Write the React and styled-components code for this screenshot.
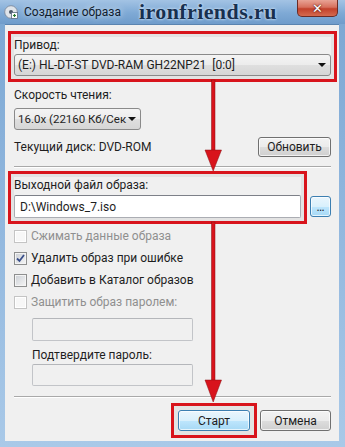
import React from "react";
import styled, { createGlobalStyle } from "styled-components";

const Global = createGlobalStyle`
  html, body {
    margin: 0;
    padding: 0;
    background: #fff;
  }
  body {
    font-family: Roboto, "Noto Sans", sans-serif;
    font-size: 12px;
    color: #1e1e1e;
  }
`;

const RED = "#d8141c";

const Window = styled.div`
  position: relative;
  width: 345px;
  height: 447px;
  box-sizing: border-box;
  display: flex;
  flex-direction: column;
  padding: 0 6px 6px 5px;
  background: linear-gradient(to bottom, #7aa6d2 0%, #8db4dc 40%, #a9c9e8 100%);
  overflow: hidden;
`;

const TitleBar = styled.div`
  height: 24px;
  display: flex;
  align-items: center;
  position: relative;
  margin: 0 -6px 0 -5px;
  padding-left: 4px;
  background: linear-gradient(to bottom, #a3c3e4 0%, #7ea9d5 55%, #6f9ccb 100%);
`;

const AppIcon = styled.svg`
  width: 14px;
  height: 14px;
  flex: none;
`;

const Title = styled.span`
  margin-left: 6px;
  font-size: 12px;
  color: #10202f;
  text-shadow: 0 0 6px rgba(255, 255, 255, 0.9);
`;

const Watermark = styled.span`
  margin-left: 18px;
  font-family: "Liberation Serif", "DejaVu Serif", serif;
  font-weight: bold;
  font-size: 22px;
  letter-spacing: 0.4px;
  color: #17304f;
  text-shadow: 0 0 2px #cfe3f6, 0 0 3px #cfe3f6;
`;

const CloseButton = styled.div`
  position: absolute;
  right: 7px;
  top: 0;
  width: 41px;
  height: 17px;
  box-sizing: border-box;
  border: 1px solid #6b2b25;
  border-top: none;
  border-radius: 0 0 5px 5px;
  background: linear-gradient(to bottom, #e8a395 0%, #d7705d 45%, #c2412b 55%, #d46a4f 100%);
  display: flex;
  align-items: center;
  justify-content: center;
  color: #fff;
  font-family: "DejaVu Sans", sans-serif;
  font-weight: bold;
  font-size: 13px;
  text-shadow: 0 0 1px #5a1a14, 0 0 2px #5a1a14;
`;

const Client = styled.div`
  flex: 1;
  display: flex;
  flex-direction: column;
  background: #f0f0f0;
  padding: 0 8px 0 9px;
  border-top: 1px solid #5a84b0;
`;

const Highlight = styled.div`
  outline: 3px solid ${RED};
  outline-offset: ${(p) => p.$offset}px;
  box-shadow: 0 0 0 ${(p) => p.$offset + 3}px rgba(0, 0, 0, 0.05);
  margin-top: ${(p) => p.$mt || 0}px;
  flex: ${(p) => p.$flex || "none"};
`;

const Label = styled.div`
  line-height: 16px;
  height: 16px;
  margin-top: ${(p) => p.$mt || 0}px;
  margin-left: ${(p) => p.$ml || 0}px;
  color: #1e1e1e;
`;

const Combo = styled.div`
  position: relative;
  height: 22px;
  width: ${(p) => (p.$width ? p.$width + "px" : "auto")};
  box-sizing: border-box;
  margin-top: ${(p) => p.$mt || 0}px;
  border: 1px solid #8a8a8a;
  border-radius: 3px;
  background: linear-gradient(to bottom, #f4f4f4 0%, #ececec 50%, #dfdfdf 51%, #d6d6d6 100%);
  display: flex;
  align-items: center;
  padding: 0 13px 0 3px;
  font-size: ${(p) => p.$fs || 12}px;
  white-space: nowrap;
  overflow: hidden;
  &::after {
    content: "";
    position: absolute;
    right: 4px;
    top: 8px;
    border-left: 4px solid transparent;
    border-right: 4px solid transparent;
    border-top: 4px solid #111;
  }
`;

const ComboText = styled.span`
  overflow: hidden;
  flex: 1;
`;

const Row = styled.div`
  display: flex;
  align-items: ${(p) => p.$align || "center"};
  justify-content: ${(p) => p.$justify || "flex-start"};
  gap: ${(p) => p.$gap || 0}px;
  margin-top: ${(p) => p.$mt || 0}px;
`;

const Button = styled.div`
  height: ${(p) => p.$h || 20}px;
  width: ${(p) => p.$w}px;
  box-sizing: border-box;
  border: 1px solid ${(p) => (p.$primary ? "#3c7fb1" : "#707070")};
  border-radius: 3px;
  background: ${(p) =>
    p.$primary
      ? "linear-gradient(to bottom, #eaf6fd 0%, #d9f0fc 50%, #bee6fd 51%, #a7d9f5 100%)"
      : "linear-gradient(to bottom, #f2f2f2 0%, #ebebeb 50%, #dddddd 51%, #cfcfcf 100%)"};
  box-shadow: inset 0 0 0 1px rgba(255, 255, 255, 0.7);
  display: flex;
  align-items: center;
  justify-content: center;
  color: #1e1e1e;
  flex: none;
`;

const Separator = styled.div`
  height: 1px;
  background: #a9a9a9;
  border-bottom: 1px solid #fff;
  margin-top: ${(p) => p.$mt}px;
`;

const TextInput = styled.div`
  height: ${(p) => p.$h || 23}px;
  width: ${(p) => (p.$width ? p.$width + "px" : "auto")};
  box-sizing: border-box;
  margin-top: ${(p) => p.$mt || 0}px;
  margin-left: ${(p) => p.$ml || 0}px;
  border: 1px solid ${(p) => (p.$disabled ? "#c2c4c8" : "#abadb3")};
  border-top-color: ${(p) => (p.$disabled ? "#b4b6ba" : "#7d8088")};
  border-radius: 2px;
  background: ${(p) => (p.$disabled ? "#f0f0f0" : "#fff")};
  display: flex;
  align-items: center;
  padding-left: 5px;
`;

const CheckList = styled.div`
  margin-top: ${(p) => p.$mt}px;
`;

const CheckRow = styled.label`
  display: flex;
  align-items: center;
  height: 22px;
  gap: 4px;
  color: ${(p) => (p.$disabled ? "#8f8f8f" : "#1e1e1e")};
`;

const Box = styled.span`
  width: 13px;
  height: 13px;
  box-sizing: border-box;
  border: 1px solid ${(p) => (p.$disabled ? "#c4c4c4" : "#8e8f8f")};
  background: ${(p) =>
    p.$disabled
      ? "#f7f7f7"
      : "linear-gradient(135deg, #cbcfd5 0%, #f6f6f6 100%)"};
  box-shadow: inset 0 0 0 1px ${(p) => (p.$disabled ? "#fff" : "#f4f4f4")};
  display: flex;
  align-items: center;
  justify-content: center;
  flex: none;
`;

const Overlay = styled.svg`
  position: absolute;
  left: 0;
  top: 0;
  pointer-events: none;
`;

const Check = ({ label, checked, disabled }) => (
  <CheckRow $disabled={disabled}>
    <Box $disabled={disabled}>
      {checked && (
        <svg width="9" height="9" viewBox="0 0 9 9">
          <path d="M1 4.5 L3.5 7 L8 1" stroke="#3a4f8a" strokeWidth="1.8" fill="none" />
        </svg>
      )}
    </Box>
    {label}
  </CheckRow>
);

export default function App() {
  return (
    <>
      <Global />
      <Window>
        <TitleBar>
          <AppIcon viewBox="0 0 14 14">
            <circle cx="7" cy="7" r="6.3" fill="#dfe4ea" stroke="#7a8494" strokeWidth="0.8" />
            <circle cx="7" cy="7" r="2" fill="#4a5666" />
            <rect x="7.5" y="7.5" width="6" height="6" fill="#fff" stroke="#5a6a80" strokeWidth="0.8" />
            <path d="M9 10.5 H12 M10.5 9 V12" stroke="#2a7a30" strokeWidth="1.2" />
          </AppIcon>
          <Title>Создание образа</Title>
          <Watermark>ironfriends.ru</Watermark>
          <CloseButton>✕</CloseButton>
        </TitleBar>
        <Client>
          <Highlight $offset={3} $mt={12}>
            <Label>Привод:</Label>
            <Combo $mt={1}>
              <ComboText>(E:) HL-DT-ST DVD-RAM GH22NP21&nbsp;&nbsp;[0:0]</ComboText>
            </Combo>
          </Highlight>
          <Label $mt={11}>Скорость чтения:</Label>
          <Combo $mt={5} $width={127} $fs={11.5}>
            <ComboText>16.0x (22160 Кб/Сек</ComboText>
          </Combo>
          <Row $justify="space-between" $mt={7}>
            <span>Текущий диск: DVD-ROM</span>
            <Button $w={73}>Обновить</Button>
          </Row>
          <Separator $mt={9} />
          <Row $align="flex-end" $mt={9} $justify="space-between">
            <Highlight $offset={3} $flex="1">
              <Label>Выходной файл образа:</Label>
              <TextInput $mt={2}>D:\Windows_7.iso</TextInput>
            </Highlight>
            <Button $w={21} $h={21} $primary style={{ marginLeft: 9, marginBottom: 1 }}>
              …
            </Button>
          </Row>
          <CheckList $mt={7}>
            <Check label="Сжимать данные образа" disabled />
            <Check label="Удалить образ при ошибке" checked />
            <Check label="Добавить в Каталог образов" />
            <Check label="Защитить образ паролем:" disabled />
          </CheckList>
          <TextInput $disabled $width={161} $ml={18} $mt={5} />
          <Label $ml={18} $mt={6}>Подтвердите пароль:</Label>
          <TextInput $disabled $width={161} $ml={18} $mt={1} $h={22} />
          <Separator $mt={10} />
          <Row $justify="flex-end" $gap={10} $mt={12}>
            <Highlight $offset={4}>
              <Button $w={72} $h={21} $primary>
                Старт
              </Button>
            </Highlight>
            <Button $w={71} $h={21}>
              Отмена
            </Button>
          </Row>
        </Client>
        <Overlay width="345" height="447" viewBox="0 0 345 447">
          <g fill={RED} stroke="#8a0c10" strokeWidth="0.5">
            <rect x="211.5" y="80" width="3.5" height="72" />
            <polygon points="205,150 221.5,150 213.2,171" />
            <rect x="211.5" y="222" width="3.5" height="160" />
            <polygon points="205,380 221.5,380 213.2,402" />
          </g>
        </Overlay>
      </Window>
    </>
  );
}
